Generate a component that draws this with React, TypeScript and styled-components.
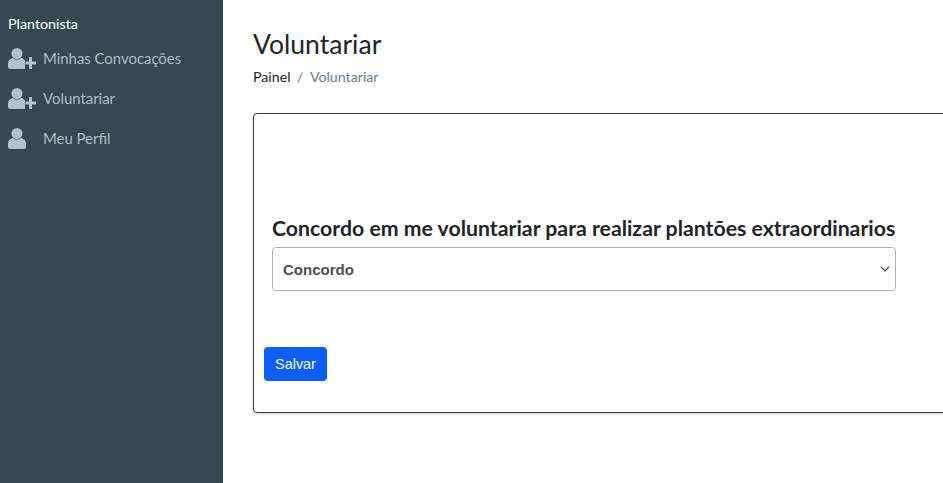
import React from 'react';
import styled, { createGlobalStyle } from 'styled-components';

const GlobalStyle = createGlobalStyle`
  html, body {
    margin: 0;
    height: 100%;
    overflow: hidden;
    background: #fff;
  }
  * {
    box-sizing: border-box;
  }
`;

const Layout = styled.div`
  display: flex;
  width: 943px;
  height: 483px;
  overflow: hidden;
  font-family: Lato, sans-serif;
`;

const Sidebar = styled.nav`
  flex: 0 0 223px;
  background: #37474f;
  padding-top: 15px;
`;

const SidebarTitle = styled.div`
  height: 18px;
  padding-left: 8px;
  font-size: 14.3px;
  line-height: 18px;
  color: #fff;
`;

const MenuList = styled.ul`
  list-style: none;
  margin: 5px 0 0;
  padding: 0;
`;

const MenuItem = styled.li`
  display: flex;
  align-items: center;
  height: 40px;
  padding-left: 8px;
  font-size: 14.9px;
  color: #b0bec5;
`;

const IconSlot = styled.span`
  display: flex;
  flex: 0 0 35px;
  align-items: center;
`;

const Main = styled.main`
  flex: 1;
  min-width: 0;
  padding: 26px 0 0 30px;
`;

const PageTitle = styled.h1`
  margin: 0;
  font-size: 26.56px;
  font-weight: 400;
  line-height: 36px;
  color: #212529;
`;

const Breadcrumb = styled.ol`
  display: flex;
  list-style: none;
  margin: 6px 0 0;
  padding: 0;
  font-size: 14.2px;
  line-height: 18px;
  color: #212529;
`;

const Crumb = styled.li<{ $active?: boolean }>`
  color: ${(p) => (p.$active ? '#607d8b' : '#212529')};

  &:not(:first-child)::before {
    content: '/';
    padding: 0 6.5px;
    color: #6c757d;
  }
`;

const Card = styled.section`
  width: 760px;
  height: 300px;
  margin-top: 27px;
  padding: 100px 10px 0;
  border: 1px solid #343a40;
  border-radius: 4px;
  box-shadow: 0 1px 3px rgba(0, 0, 0, 0.2);
`;

const Field = styled.div`
  width: 624px;
  margin-left: 8px;
`;

const FieldLabel = styled.label`
  display: block;
  font-size: 21.28px;
  font-weight: 700;
  line-height: 28px;
  white-space: nowrap;
  color: #212529;
`;

const SelectBox = styled.div`
  display: flex;
  align-items: center;
  justify-content: space-between;
  height: 44px;
  margin-top: 5px;
  padding: 0 5px 0 10px;
  border: 1px solid #b0b0b0;
  border-radius: 4px;
  font-family: 'Liberation Sans', Arial, sans-serif;
  font-size: 15px;
  font-weight: 700;
  color: #495057;
`;

const SaveButton = styled.button`
  display: block;
  width: 63px;
  height: 34px;
  margin-top: 56px;
  padding: 0;
  border: none;
  border-radius: 4px;
  background: #0d5ef4;
  font-family: 'Liberation Sans', Arial, sans-serif;
  font-size: 14.4px;
  color: #fff;
`;

const UserPlusIcon = () => (
  <svg width="28" height="21" viewBox="0 0 28 21" fill="#b3c1cf">
    <circle cx="9" cy="5.5" r="5.5" />
    <path d="M0 19v-3.500C0 12.500 2.500 10.500 5 10c1.200 1 2.500 1.500 4 1.500s2.800-.5 4-1.500c1.800.3 3.300 1.200 4 2.500v8.500H2c-1.200 0-2-.8-2-2z" />
    <path d="M21 9h3v4.500h4v3h-4V21h-3v-4.500h-3.500v-3H21z" />
  </svg>
);

const UserIcon = () => (
  <svg width="18" height="21" viewBox="0 0 18 21" fill="#b3c1cf">
    <circle cx="9" cy="5.500" r="5.500" />
    <path d="M0 19v-3.500C0 12.500 2.500 10.500 5 10c1.200 1 2.500 1.500 4 1.500s2.800-.5 4-1.500c2.500.5 5 2.500 5 5.500V19c0 1.200-.8 2-2 2H2c-1.200 0-2-.8-2-2z" />
  </svg>
);

const ChevronIcon = () => (
  <svg width="10" height="10" viewBox="0 0 16 16" fill="none" stroke="#343a40" strokeWidth="2" strokeLinecap="round" strokeLinejoin="round">
    <path d="M2 5l6 6 6-6" />
  </svg>
);

const menu = [
  { label: 'Minhas Convocações', icon: <UserPlusIcon /> },
  { label: 'Voluntariar', icon: <UserPlusIcon /> },
  { label: 'Meu Perfil', icon: <UserIcon /> },
];

const App: React.FC = () => (
  <Layout>
    <GlobalStyle />
    <Sidebar>
      <SidebarTitle>Plantonista</SidebarTitle>
      <MenuList>
        {menu.map((item) => (
          <MenuItem key={item.label}>
            <IconSlot>{item.icon}</IconSlot>
            {item.label}
          </MenuItem>
        ))}
      </MenuList>
    </Sidebar>
    <Main>
      <PageTitle>Voluntariar</PageTitle>
      <Breadcrumb>
        <Crumb>Painel</Crumb>
        <Crumb $active>Voluntariar</Crumb>
      </Breadcrumb>
      <Card>
        <Field>
          <FieldLabel>Concordo em me voluntariar para realizar plantões extraordinarios</FieldLabel>
          <SelectBox>
            Concordo
            <ChevronIcon />
          </SelectBox>
        </Field>
        <SaveButton>Salvar</SaveButton>
      </Card>
    </Main>
  </Layout>
);

export default App;
